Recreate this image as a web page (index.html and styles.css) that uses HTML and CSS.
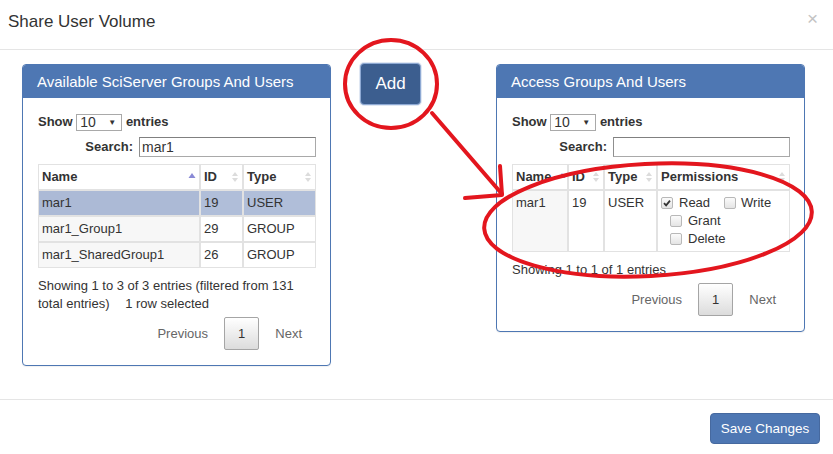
FILE: index.html
```html
<!DOCTYPE html>
<html>
<head>
<meta charset="utf-8">
<link rel="stylesheet" href="styles.css">
</head>
<body>
<div class="modal">
  <div class="modal-header">
    <h4 class="modal-title">Share User Volume</h4>
    <span class="close">×</span>
  </div>
  <div class="modal-body">
    <div class="panel">
      <div class="panel-heading">Available SciServer Groups And Users</div>
      <div class="panel-body">
        <div class="dt-length">Show <span class="select">10<span class="caret">▼</span></span> entries</div>
        <div class="dt-filter"><label>Search:<span class="input">mar1</span></label></div>
        <table class="dt">
          <thead>
            <tr>
              <th class="c-name">Name<span class="sort"><svg width="8" height="14" viewBox="0 0 8 14"><path d="M0.5 8 L4 3 L7.5 8 Z" fill="#8a8ad6"/></svg></span></th>
              <th class="c-id">ID<span class="sort"><svg width="8" height="14" viewBox="0 0 8 14"><path d="M1 6 L4 2 L7 6 Z M1 8 L4 12 L7 8 Z" fill="#dcdcdc"/></svg></span></th>
              <th class="c-type">Type<span class="sort"><svg width="8" height="14" viewBox="0 0 8 14"><path d="M1 6 L4 2 L7 6 Z M1 8 L4 12 L7 8 Z" fill="#dcdcdc"/></svg></span></th>
            </tr>
          </thead>
          <tbody>
            <tr class="selected"><td class="sorted">mar1</td><td>19</td><td>USER</td></tr>
            <tr><td class="sorted">mar1_Group1</td><td>29</td><td>GROUP</td></tr>
            <tr><td class="sorted">mar1_SharedGroup1</td><td>26</td><td>GROUP</td></tr>
          </tbody>
        </table>
        <div class="dt-info">Showing 1 to 3 of 3 entries (filtered from 131 total entries) <span class="select-info">1 row selected</span></div>
        <div class="dt-paginate"><span class="pg">Previous</span><span class="pg current">1</span><span class="pg">Next</span></div>
      </div>
    </div>

    <div class="add-wrap"><button class="btn-add">Add</button></div>

    <div class="panel panel-right">
      <div class="panel-heading">Access Groups And Users</div>
      <div class="panel-body">
        <div class="dt-length">Show <span class="select">10<span class="caret">▼</span></span> entries</div>
        <div class="dt-filter"><label>Search:<span class="input"></span></label></div>
        <table class="dt">
          <thead>
            <tr>
              <th class="r-name">Name<span class="sort"><svg width="8" height="14" viewBox="0 0 8 14"><path d="M0.5 8 L4 3 L7.5 8 Z" fill="#8a8ad6"/></svg></span></th>
              <th class="r-id">ID<span class="sort"><svg width="8" height="14" viewBox="0 0 8 14"><path d="M1 6 L4 2 L7 6 Z M1 8 L4 12 L7 8 Z" fill="#dcdcdc"/></svg></span></th>
              <th class="r-type">Type<span class="sort"><svg width="8" height="14" viewBox="0 0 8 14"><path d="M1 6 L4 2 L7 6 Z M1 8 L4 12 L7 8 Z" fill="#dcdcdc"/></svg></span></th>
              <th class="r-perm">Permissions<span class="sort"><svg width="8" height="14" viewBox="0 0 8 14"><path d="M1 6 L4 2 L7 6 Z M1 8 L4 12 L7 8 Z" fill="#dcdcdc"/></svg></span></th>
            </tr>
          </thead>
          <tbody>
            <tr>
              <td class="sorted">mar1</td><td>19</td><td>USER</td>
              <td class="perms">
                <div class="perm-line"><span class="cb checked"><svg width="10" height="10" viewBox="0 0 10 10"><path d="M2 5.2 L4.1 7.3 L8 2.6" fill="none" stroke="#333" stroke-width="1.8"/></svg></span>Read<span class="cb gap"></span>Write</div>
                <div class="perm-line indent"><span class="cb"></span>Grant</div>
                <div class="perm-line indent"><span class="cb"></span>Delete</div>
              </td>
            </tr>
          </tbody>
        </table>
        <div class="dt-info">Showing 1 to 1 of 1 entries</div>
        <div class="dt-paginate"><span class="pg">Previous</span><span class="pg current">1</span><span class="pg">Next</span></div>
      </div>
    </div>
  </div>
  <div class="modal-footer"><button class="btn-save">Save Changes</button></div>

  <svg class="annot" width="833" height="454" viewBox="0 0 833 454">
    <g fill="none" stroke="#e3161e" stroke-width="4" stroke-linecap="round" stroke-linejoin="round">
      <ellipse cx="391" cy="84" rx="46" ry="44"/>
      <path d="M432 113 L502 194"/>
      <path d="M500 166 L502 195 L465 198"/>
      <ellipse cx="648" cy="220" rx="164" ry="56" transform="rotate(-3 648 220)"/>
    </g>
  </svg>
</div>
</body>
</html>
```

FILE: styles.css
```css
* { box-sizing: border-box; }

body {
  margin: 0;
  background: #fff;
  color: #333;
  font-family: "Liberation Sans", Arial, sans-serif;
  font-size: 14px;
}

.modal {
  position: relative;
  width: 833px;
  height: 454px;
  overflow: hidden;
}

.modal-header {
  height: 50px;
  border-bottom: 1px solid #e5e5e5;
  display: flex;
  justify-content: space-between;
  align-items: flex-start;
  padding: 12px 15px 0 8px;
}

.modal-title {
  margin: 0;
  font-size: 17px;
  font-weight: normal;
  line-height: 20px;
  color: #333;
}

.close {
  font-size: 19px;
  line-height: 14px;
  color: #c3c3c3;
}

.modal-body {
  height: 349px;
  display: flex;
  align-items: flex-start;
  padding: 14px 0 0 22px;
}

.panel {
  width: 309px;
  border: 1px solid #4e77b3;
  border-radius: 4px;
  background: #fff;
  box-shadow: 0 1px 1px rgba(0, 0, 0, 0.06);
}

.panel-right {
  margin-left: 75px;
}

.panel-heading {
  height: 33px;
  background: #4e77b3;
  color: #fff;
  font-size: 15px;
  line-height: 33px;
  padding: 0 14px;
  border-radius: 3px 3px 0 0;
}

.panel-body {
  padding: 15px 14px 15px 15px;
  font-size: 13px;
}

.dt-length {
  line-height: 18px;
  font-weight: bold;
}

.select {
  display: inline-block;
  width: 46px;
  height: 17px;
  border: 1px solid #a9a9a9;
  font-weight: normal;
  font-size: 14px;
  line-height: 15px;
  padding-left: 3px;
  vertical-align: top;
  margin-top: 1px;
  position: relative;
}

.caret {
  position: absolute;
  right: 5px;
  top: 0;
  font-size: 8px;
  color: #333;
}

.dt-filter {
  margin-top: 6px;
  text-align: right;
  font-weight: bold;
  line-height: 20px;
}

.input {
  display: inline-block;
  width: 177px;
  height: 20px;
  margin-left: 6px;
  border: 1px solid #a9a9a9;
  border-top-color: #808080;
  border-left-color: #8f8f8f;
  text-align: left;
  font-weight: normal;
  font-size: 14px;
  line-height: 18px;
  padding-left: 2px;
  vertical-align: top;
}

.dt {
  width: 100%;
  margin-top: 7px;
  border-collapse: separate;
  border-spacing: 0;
  table-layout: fixed;
}

.dt th,
.dt td {
  border: 1px solid #e2e2e2;
  padding: 3px 3px;
  line-height: 18px;
  text-align: left;
  vertical-align: top;
}

.dt th {
  font-weight: bold;
}

.sort {
  float: right;
  height: 18px;
  display: flex;
  align-items: center;
}

.c-name { width: 162px; }
.c-id { width: 43px; }
.c-type { width: auto; }

.r-name { width: 56px; }
.r-id { width: 36px; }
.r-type { width: 53px; }
.r-perm { width: auto; }

.dt td.sorted {
  background: #f7f7f7;
}

.dt tr.selected td {
  background: #b0bed9;
}

.dt tr.selected td.sorted {
  background: #acbad6;
}

.dt th.r-name .sort {
  margin-right: -2px;
}

.perms {
  padding-left: 4px;
}

.perm-line {
  display: flex;
  align-items: center;
  height: 18px;
}

.perm-line.indent {
  padding-left: 9px;
}

.cb {
  display: inline-flex;
  align-items: center;
  justify-content: center;
  width: 12px;
  height: 12px;
  border: 1px solid #b8b8b8;
  border-radius: 2px;
  background: linear-gradient(#fbfbfb, #e4e4e4);
  margin-right: 6px;
}

.cb.gap {
  margin-left: 14px;
  margin-right: 5px;
}

.dt-info {
  padding-top: 9px;
  line-height: 18px;
}

.select-info {
  margin-left: 12px;
}

.dt-paginate {
  margin-top: 4px;
  text-align: right;
}

.pg {
  display: inline-block;
  padding: 7px 13px;
  line-height: 17px;
  border: 1px solid transparent;
  border-radius: 2px;
  margin-left: 2px;
  color: #666;
}

.pg.current {
  color: #333;
  border-color: #a5a5a5;
  background: linear-gradient(#ffffff, #dcdcdc);
}

.add-wrap {
  margin-left: 29px;
  margin-top: -1px;
}

.btn-add {
  width: 61px;
  height: 42px;
  background: #3c5e8f;
  color: #fff;
  border: 1px solid #8ea9d3;
  border-radius: 4px;
  font-family: "Liberation Sans", Arial, sans-serif;
  font-size: 17px;
  padding: 0;
  box-shadow: 0 0 0 1px #dfe7f3;
}

.modal-footer {
  border-top: 1px solid #e5e5e5;
  padding: 13px 13px 0 0;
  display: flex;
  justify-content: flex-end;
}

.btn-save {
  width: 110px;
  height: 31px;
  background: #4e77b3;
  color: #fff;
  border: 1px solid #46699f;
  border-radius: 4px;
  font-family: "Liberation Sans", Arial, sans-serif;
  font-size: 13.5px;
  padding: 0;
}

.annot {
  position: absolute;
  left: 0;
  top: 0;
  pointer-events: none;
}
```
